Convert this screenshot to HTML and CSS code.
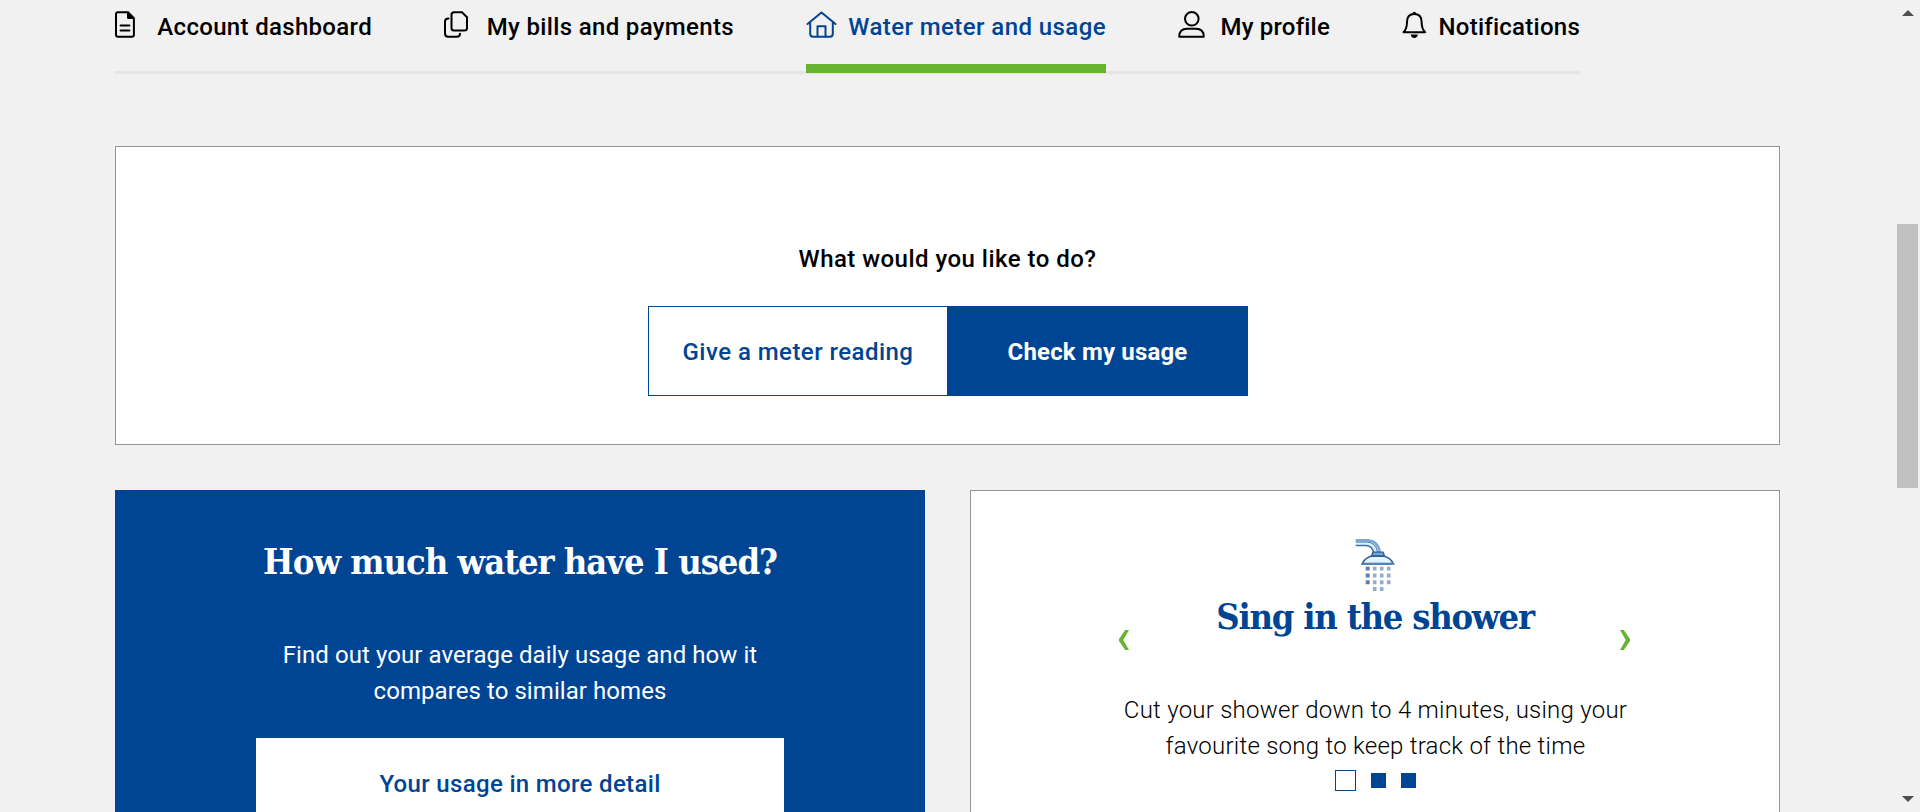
FILE: index.html
```
<!DOCTYPE html>
<html lang="en">
<head>
<meta charset="utf-8">
<title>Water meter and usage</title>
<link rel="stylesheet" href="styles.css">
</head>
<body>
<div class="page">
  <nav class="tabs">
    <a class="tab tab-dashboard">
      <svg class="icon" width="20" height="27" viewBox="0 0 20 27"><path d="M3 1.200h10l5.900 6v16.600q0 2-2 2H3q-2 0-2-2V3.200q0-2 2-2z" fill="none" stroke="currentColor" stroke-width="2"/><path d="M12 1l7 7h-5.500q-1.500 0-1.500-1.500z" fill="currentColor"/><path d="M5.500 14.500h9M5.500 19.500h9" stroke="currentColor" stroke-width="1.800" stroke-linecap="round"/></svg>
      <span>Account dashboard</span>
    </a>
    <a class="tab tab-bills">
      <svg class="icon" width="25" height="27" viewBox="0 0 25 27"><path d="M11 1.200h8l5 5v10.800q0 2.500-2.500 2.500H11q-2.500 0-2.500-2.500V3.700q0-2.500 2.500-2.500z" fill="none" stroke="currentColor" stroke-width="2"/><path d="M5.500 7.500q-3.500 0-3.500 3v12q0 3.300 3.300 3.300h8.400q3.300 0 3.300-3" fill="none" stroke="currentColor" stroke-width="2" stroke-linecap="round"/></svg>
      <span>My bills and payments</span>
    </a>
    <a class="tab tab-usage active">
      <svg class="icon" width="31" height="27" viewBox="0 0 31 27" fill="none" stroke="currentColor" stroke-width="2" stroke-linecap="round" stroke-linejoin="round"><path d="M1.500 13L15.500 1.500 29.500 13M4.200 11v11.800q0 3 3 3h16.600q3 0 3-3V11"/><path d="M11.500 25.500V15.200h8v10.300"/></svg>
      <span>Water meter and usage</span>
    </a>
    <a class="tab tab-profile">
      <svg class="icon" width="27" height="27" viewBox="0 0 27 27" fill="none" stroke="currentColor" stroke-width="2" stroke-linejoin="round"><circle cx="13.800" cy="7.800" r="6.800"/><path d="M1.200 25.800q0-8 8-8h8.600q8 0 8 8z"/></svg>
      <span>My profile</span>
    </a>
    <a class="tab tab-alerts">
      <svg class="icon" width="25" height="27" viewBox="0 0 25 27"><path d="M1.500 21.200Q5 18 5 11Q5 3 12.300 3T19.600 11Q19.600 18 23.200 21.200z" fill="none" stroke="currentColor" stroke-width="2" stroke-linejoin="round"/><path d="M10.800 3V1.600q1.500-1.600 3 0V3zM8.700 23.500h7.200q-.6 3.400-3.600 3.400t-3.600-3.400z" fill="currentColor"/></svg>
      <span>Notifications</span>
    </a>
  </nav>

  <section class="panel choice">
    <p class="question">What would you like to do?</p>
    <div class="toggle">
      <button class="option option-reading">Give a meter reading</button>
      <button class="option option-usage">Check my usage</button>
    </div>
  </section>

  <div class="cards">
    <section class="card card-usage">
      <h2 class="title title-usage">How much water have I used?</h2>
      <p class="summary">Find out your average daily usage and how it<br>compares to similar homes</p>
      <a class="detail-link">Your usage in more detail</a>
    </section>
    <section class="panel card card-tip">
      <svg class="shower" width="54" height="56" viewBox="0 0 54 56">
        <path d="M7.700 1.200H19Q30 1.500 31.500 13.500L25 14Q24 6.300 18 6.300H7.700z" fill="#dceefb"/>
        <path d="M7.700 1.200H19Q30 1.500 32 13.500" fill="none" stroke="#78a8db" stroke-width="2.400"/>
        <path d="M7.700 3H18.500Q27.500 3.200 29.500 13" fill="none" stroke="#4c79ab" stroke-width="1"/>
        <path d="M7.700 6.400H17.500Q24 6.500 25.500 13" fill="none" stroke="#41709f" stroke-width="1.500"/>
        <path d="M25 13.200h10l1.500 3.600H23.500z" fill="#6fa5dc" stroke="#285b91" stroke-width="1.300"/>
        <path d="M23 17.300h13.500q7 2.500 8.500 7.200h-30.500q1.500-4.700 8.500-7.200z" fill="#e2f4fd" stroke="#315f92" stroke-width="1.500"/>
        <path d="M14 25h31.500" stroke="#5484b7" stroke-width="2.200" stroke-linecap="round"/>
        <path d="M19.700 27.700v18" stroke="#5c82b2" stroke-width="4" stroke-dasharray="3.900 2.900"/>
        <path d="M26.700 27.700V54M33.700 27.700V54M40.700 27.700v18" stroke="#91adcd" stroke-width="3.600" stroke-dasharray="3.900 2.900"/>
      </svg>
      <h2 class="title title-tip">Sing in the shower</h2>
      <p class="tip">Cut your shower down to 4 minutes, using your<br>favourite song to keep track of the time</p>
      <div class="dots"><i class="dot dot-current"></i><i class="dot"></i><i class="dot"></i></div>
      <svg class="arrow arrow-prev" width="10" height="20" viewBox="0 0 10 20"><path d="M6.200 0H10L4.200 10 10 20H6.200L0 11V9z" fill="#65b32e"/></svg>
      <svg class="arrow arrow-next" width="10" height="20" viewBox="0 0 10 20"><path d="M3.800 0H0l5.800 10L0 20h3.800L10 11V9z" fill="#65b32e"/></svg>
    </section>
  </div>
</div>
<div class="scrollbar">
  <svg width="12" height="6" viewBox="0 0 12 6"><path d="M6 0l6 6H0z" fill="#505050"/></svg>
  <div class="thumb"></div>
  <svg class="scroll-down" width="12" height="6" viewBox="0 0 12 6"><path d="M0 0h12L6 6z" fill="#505050"/></svg>
</div>
</body>
</html>
```
FILE: styles.css
```
* { box-sizing: border-box; }
html, body { height: 100%; }
body {
  margin: 0;
  overflow: hidden;
  background: #f1f1f1;
  color: #000;
  font: 400 24px/36px Roboto, "Liberation Sans", sans-serif;
  display: flex;
  justify-content: space-between;
}
p, h2 { margin: 0; }
.page { width: 1780px; height: 812px; padding-left: 115px; overflow: hidden; }

.tabs {
  display: flex;
  gap: 72px;
  width: 1465px;
  height: 74px;
  box-shadow: inset 0 -3px #e5e5e5;
  font-weight: 500;
}
.tab {
  display: flex;
  justify-content: space-between;
  align-items: flex-start;
  flex: none;
  height: 73px;
  padding-top: 9px;
  white-space: nowrap;
}
.icon { display: block; margin-top: 2px; }
.tab-dashboard { width: 257px; margin-right: -1px; letter-spacing: .32px; }
.tab-bills { width: 291px; letter-spacing: .34px; }
.tab-usage { width: 300px; letter-spacing: .42px; }
.tab-profile { width: 152px; letter-spacing: .2px; }
.tab-alerts { width: 178px; letter-spacing: .25px; }
.active { color: #004494; border-bottom: 9px solid #65b32e; }

.panel { background: #fff; border: 1px solid #959595; }
.choice {
  height: 299px;
  margin-top: 72px;
  padding-top: 94px;
  display: flex;
  flex-direction: column;
  align-items: center;
  gap: 29px;
}
.question { font-weight: 500; letter-spacing: .47px; }
.toggle { display: flex; width: 600px; height: 90px; border: 1px solid #004494; }
.option {
  flex: none;
  width: 298px;
  padding: 1px 0 0;
  border: 0;
  background: #fff;
  color: #004494;
  font: 500 24px/36px Roboto, "Liberation Sans", sans-serif;
  letter-spacing: .46px;
}
.option-reading { padding-left: 1px; }
.option-usage { flex: 1; padding-left: 2px; background: #004494; color: #fff; font-weight: 700; letter-spacing: .17px; }

.cards { display: grid; grid-template-columns: 810px 810px; gap: 45px; margin-top: 45px; }
.card {
  height: 400px;
  display: flex;
  flex-direction: column;
  align-items: center;
  text-align: center;
  white-space: nowrap;
}
.title { margin-bottom: 2px; font: 700 36px/46px "DejaVu Serif Condensed", "DejaVu Serif", serif; }
.card-usage { background: #004494; color: #fff; padding-top: 48px; }
.title-usage { letter-spacing: -1.05px; }
.summary { margin-top: 51px; letter-spacing: .07px; }
.detail-link {
  width: 528px;
  height: 90px;
  margin-top: 29px;
  padding-top: 28px;
  background: #fff;
  color: #004494;
  font-weight: 500;
  letter-spacing: .33px;
}
.card-tip { position: relative; padding-top: 48px; }
.shower { display: block; }
.title-tip { margin-top: -2px; color: #004494; letter-spacing: -1.23px; }
.tip { margin-top: 51px; padding-left: 1px; font-weight: 300; letter-spacing: .25px; }
.dots { display: flex; align-items: center; gap: 15px; margin-top: 6px; }
.dot { width: 15px; height: 15px; background: #004494; }
.dot-current { width: 21px; height: 21px; background: #fff; border: 1px solid #004494; }
.arrow { position: absolute; top: 139px; }
.arrow-prev { left: 148px; }
.arrow-next { right: 149px; }

.scrollbar {
  width: 25px;
  height: 812px;
  padding: 10px 2px;
  display: flex;
  flex-direction: column;
  align-items: center;
}
.scrollbar svg { flex: none; }
.thumb { width: 21px; height: 264px; margin-top: 208px; background: #c1c1c1; }
.scroll-down { margin-top: auto; }
```
